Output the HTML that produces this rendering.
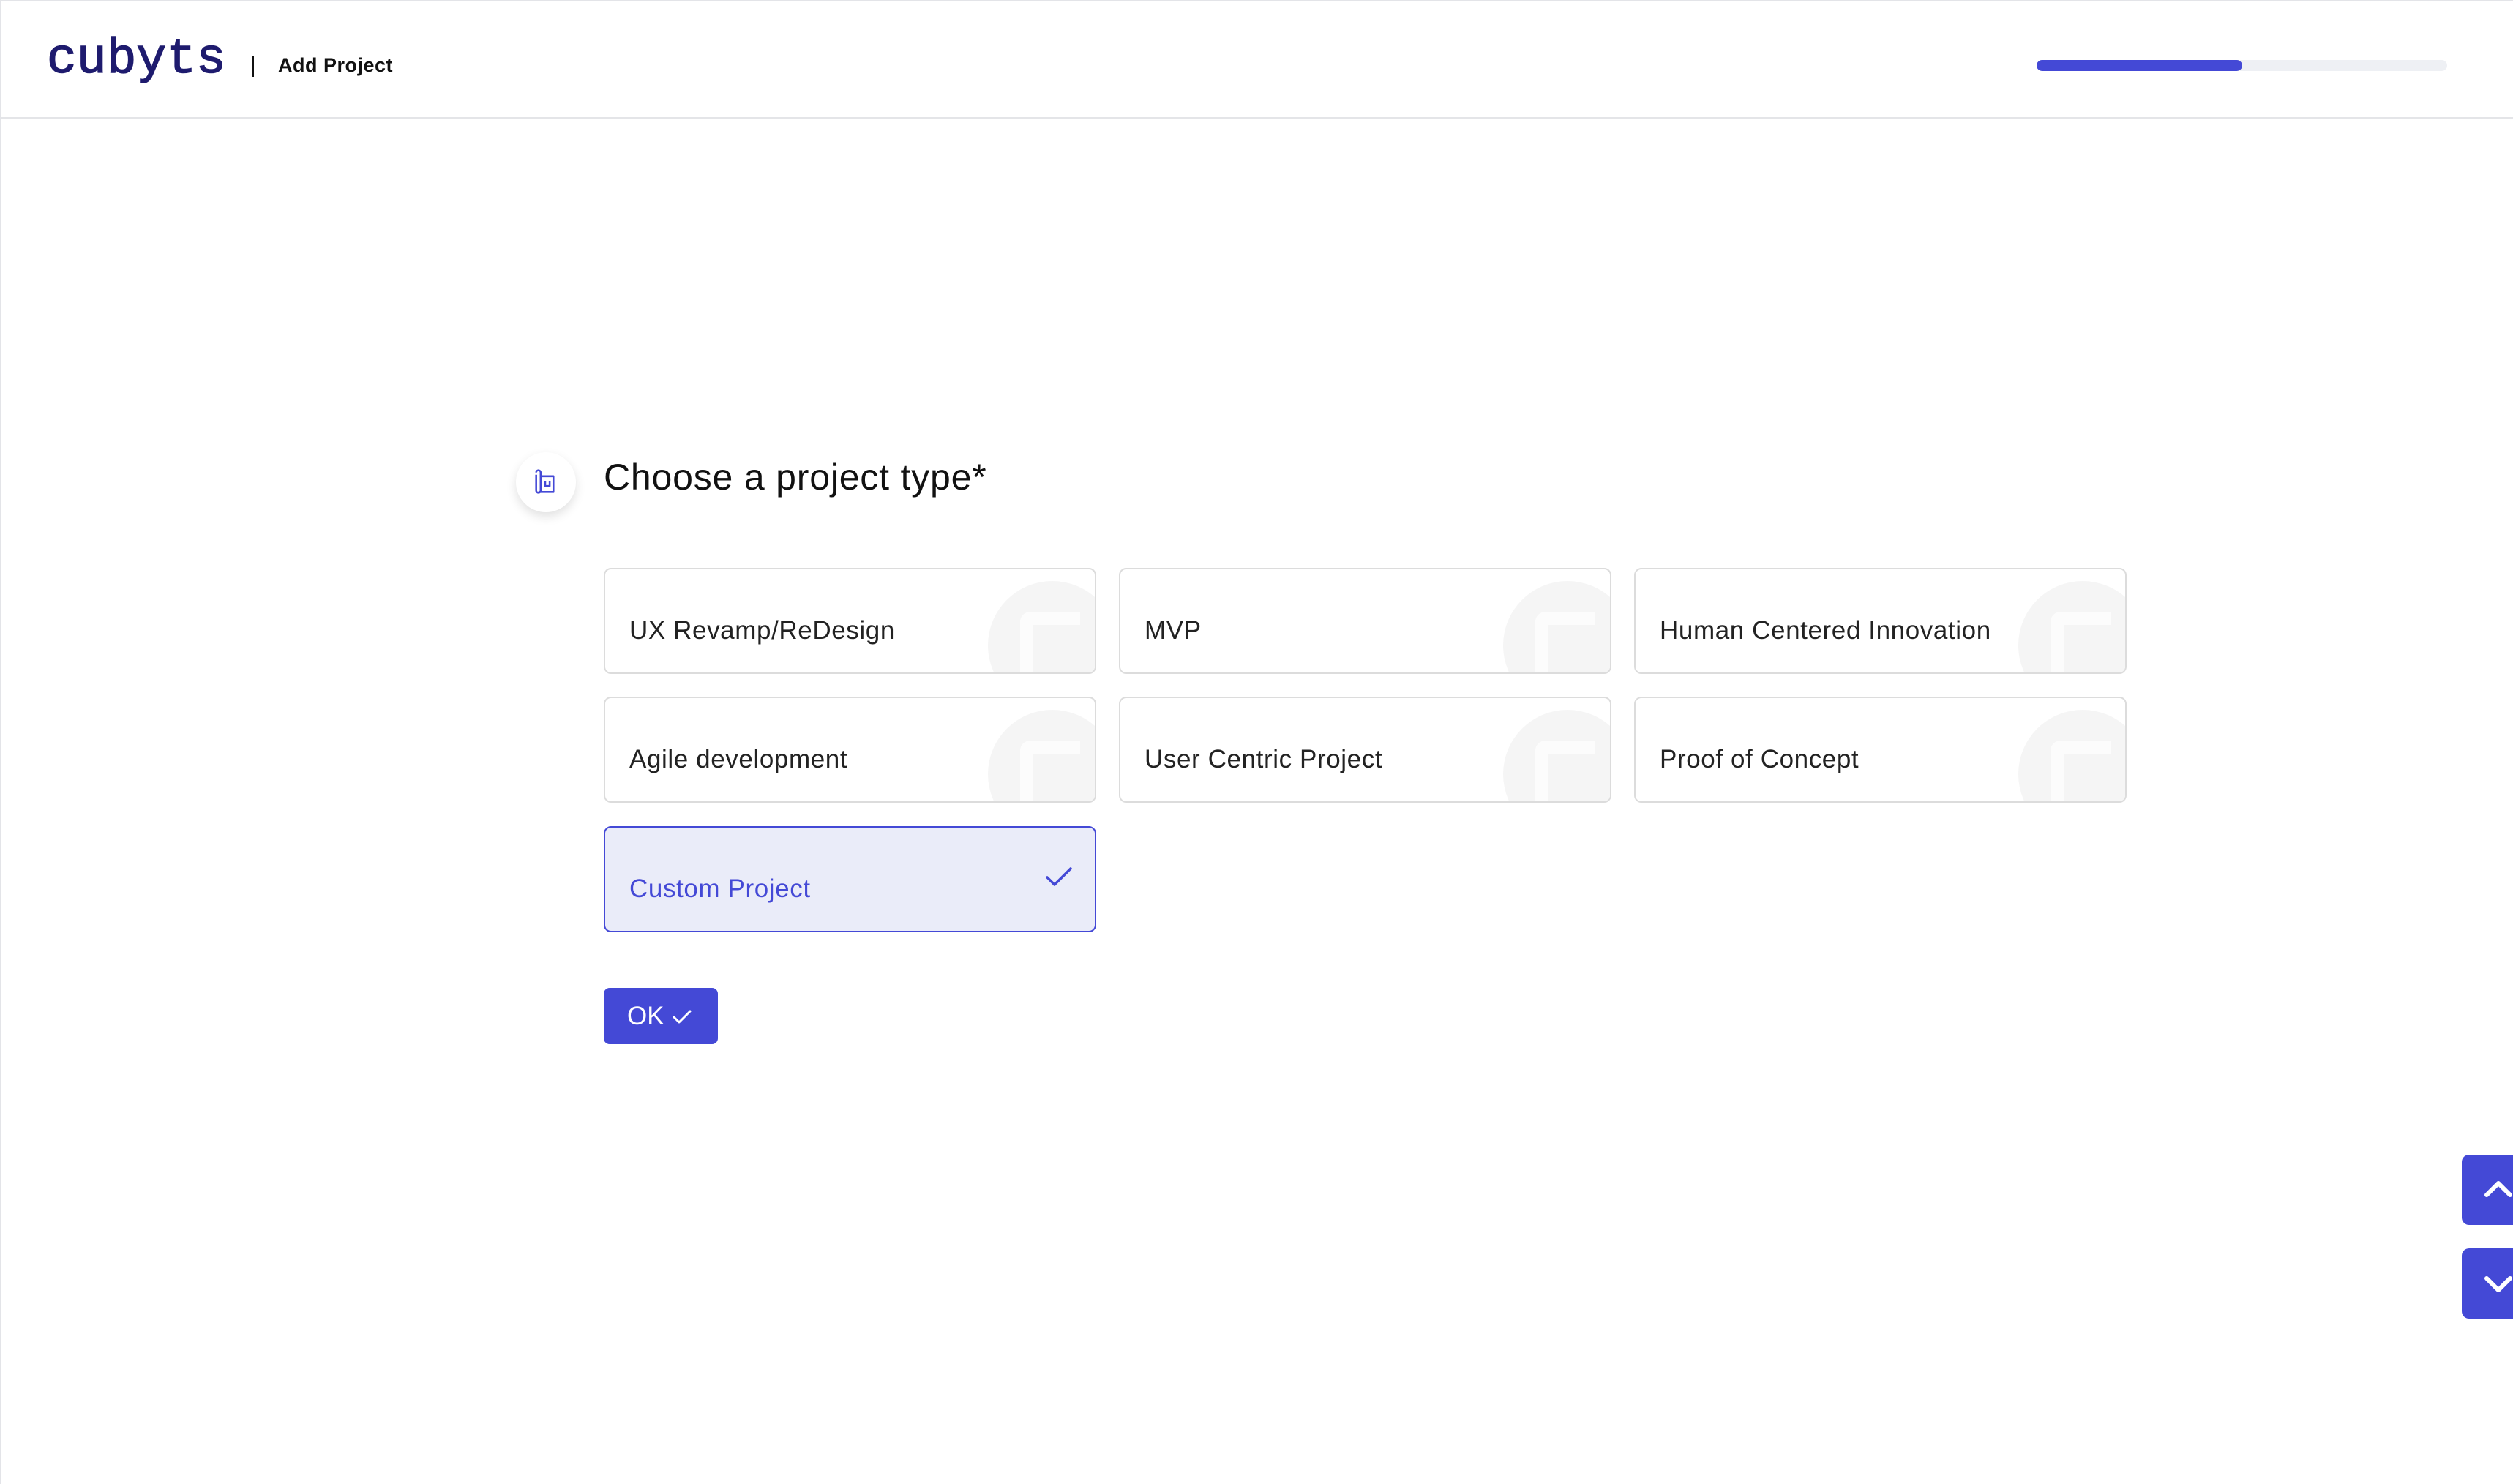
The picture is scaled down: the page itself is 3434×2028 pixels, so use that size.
<!DOCTYPE html>
<html><head><meta charset="utf-8"><style>
*{margin:0;padding:0;box-sizing:border-box}
body{width:3434px;height:2028px;background:#fff;font-family:"Liberation Sans",sans-serif;position:relative;overflow:hidden;border-top:2px solid #e3e4e8;border-left:2px solid #e3e4e8}
.hdr{position:absolute;left:0;top:0;width:3434px;height:161px;border-bottom:3px solid #e4e5e8}
.logo{position:absolute;left:62px;top:30px;font-family:"Liberation Mono",monospace;font-size:68px;color:#1e1b6e;line-height:100px;-webkit-text-stroke:1.5px #1e1b6e}
.sep{position:absolute;left:342px;top:74px;width:3px;height:29px;background:#111}
.ttl{position:absolute;left:378px;top:72px;font-size:27px;font-weight:bold;color:#111;letter-spacing:0.5px}
.track{position:absolute;left:2781px;top:80px;width:561px;height:15px;border-radius:8px;background:#eef0f4}
.fill{position:absolute;left:2781px;top:80px;width:281px;height:15px;border-radius:8px;background:#4449d6}
.ic{position:absolute;left:703px;top:616px;width:82px;height:82px;border-radius:50%;background:#fff;box-shadow:0 6px 14px rgba(0,0,0,.12)}
.q{position:absolute;left:823px;top:619px;font-size:50px;color:#111;line-height:62px;letter-spacing:0.8px}
.card{position:absolute;width:673px;height:145px;border:2px solid #dcdcdc;border-radius:10px;overflow:hidden;background:#fff}
.card span{position:absolute;left:33px;top:62px;font-size:35px;color:#222;line-height:44px;letter-spacing:0.6px}
.wm{position:absolute;right:-30px;top:16px;width:176px;height:176px;border-radius:50%;background:#f5f5f5}
.wm:after{content:"";position:absolute;left:44px;top:42px;width:64px;height:84px;border:18px solid #fcfcfc;border-right:none;border-radius:14px 0 0 14px}
.sel{background:#eaecf9;border-color:#4449d6}
.sel span{color:#4449d6}
.ok{position:absolute;left:823px;top:1348px;width:156px;height:77px;border-radius:8px;background:#4449d6;color:#fff;font-size:35px;line-height:77px;padding-left:32px}
.nav{position:absolute;left:3362px;width:72px;height:96px;background:#4449d6;border-radius:10px 0 0 10px}
</style></head><body>
<div class="hdr">
<div class="logo">cubyts</div>
<div class="sep"></div>
<div class="ttl">Add Project</div>
<div class="track"></div><div class="fill"></div>
</div>
<div class="ic"><svg width="82" height="82" viewBox="0 0 80 80"><g fill="none" stroke="#4449d6" stroke-width="2.5" stroke-linejoin="round"><path d="M27 30v21a3 3 0 0 0 6 0V27a3 3 0 0 0-6 0"/><path d="M33 32h17v21H30"/><path d="M39 39v6h6v-6"/></g></svg></div>
<div class="q">Choose a project type*</div>

<div class="card" style="left:823px;top:774px"><div class="wm"></div><span>UX Revamp/ReDesign</span></div>
<div class="card" style="left:1527px;top:774px"><div class="wm"></div><span>MVP</span></div>
<div class="card" style="left:2231px;top:774px"><div class="wm"></div><span>Human Centered Innovation</span></div>
<div class="card" style="left:823px;top:950px"><div class="wm"></div><span>Agile development</span></div>
<div class="card" style="left:1527px;top:950px"><div class="wm"></div><span>User Centric Project</span></div>
<div class="card" style="left:2231px;top:950px"><div class="wm"></div><span>Proof of Concept</span></div>
<div class="card sel" style="left:823px;top:1127px"><span>Custom Project</span>
<svg style="position:absolute;left:598px;top:50px" width="44" height="36" viewBox="0 0 44 36"><path d="M6 18l10 10L38 6" fill="none" stroke="#4449d6" stroke-width="3.5" stroke-linecap="round" stroke-linejoin="round"/></svg></div>

<div class="ok">OK <svg width="30" height="24" viewBox="0 0 30 24" style="vertical-align:-2px"><path d="M4 12l7 7L26 4" fill="none" stroke="#fff" stroke-width="3" stroke-linecap="round" stroke-linejoin="round"/></svg></div>

<div class="nav" style="top:1576px"><svg width="72" height="96"><path d="M34 55l16-16 16 16" fill="none" stroke="#fff" stroke-width="6" stroke-linecap="round" stroke-linejoin="round"/></svg></div>
<div class="nav" style="top:1704px"><svg width="72" height="96"><path d="M34 41l16 16 16-16" fill="none" stroke="#fff" stroke-width="6" stroke-linecap="round" stroke-linejoin="round"/></svg></div>
</body></html>
